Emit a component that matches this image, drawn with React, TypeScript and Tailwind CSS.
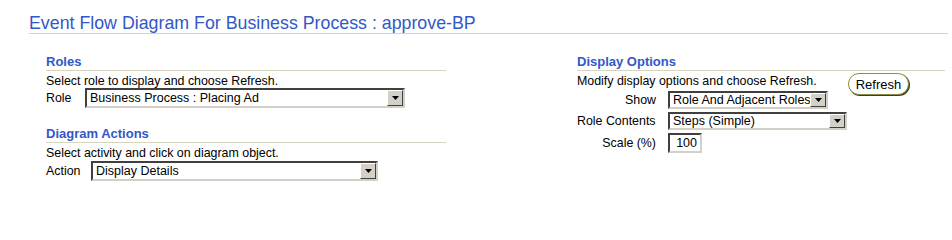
import type { ReactNode } from 'react'

const font = { fontFamily: '"Liberation Sans", Arial, sans-serif' }

function Select({ value, width, height }: { value: string; width: string; height: string }) {
  return (
    <div
      className={`flex ${width} ${height} border-2 border-t-[#404040] border-l-[#404040] border-b-[#d4d0c8] border-r-[#d4d0c8] bg-white`}
    >
      <div className="flex-1 flex items-center pl-[3px] text-[12.5px] leading-none text-black whitespace-nowrap overflow-hidden">
        {value}
      </div>
      <div className="w-[16px] flex items-center justify-center bg-[#d4d0c8] border border-t-white border-l-white border-b-[#404040] border-r-[#404040]">
        <svg width="7" height="4" viewBox="0 0 7 4">
          <path d="M0 0h7L3.5 4z" fill="#000" />
        </svg>
      </div>
    </div>
  )
}

function Heading({ children }: { children: ReactNode }) {
  return (
    <div className="text-[13px] leading-[16px] font-bold text-[#3158c8] border-b border-[#d4d4bf]">
      {children}
    </div>
  )
}

function Hint({ children }: { children: ReactNode }) {
  return <div className="mt-[3px] text-[12.4px] leading-[14px] text-black whitespace-nowrap">{children}</div>
}

export default function App() {
  return (
    <div className="w-[952px] h-[214px] bg-white pl-[29px] pr-[4px] pt-[13px]" style={font}>
      {/* Title */}
      <h1 className="text-[17.8px] leading-[20px] text-[#3158c8] border-b border-[#d4d4bf] whitespace-nowrap">
        Event Flow Diagram For Business Process : approve-BP
      </h1>

      <div className="flex pl-[17px] mt-[20px]">
        {/* Left column */}
        <div className="w-[400px]">
          <Heading>Roles</Heading>
          <Hint>Select role to display and choose Refresh.</Hint>
          <div className="flex items-center">
            <span className="w-[39px] text-[12.4px] text-black">Role</span>
            <Select value="Business Process : Placing Ad" width="w-[320px]" height="h-[20px]" />
          </div>

          <div className="mt-[18px]">
            <Heading>Diagram Actions</Heading>
          </div>
          <Hint>Select activity and click on diagram object.</Hint>
          <div className="flex items-center mt-[1px]">
            <span className="w-[45px] text-[12.4px] text-black">Action</span>
            <Select value="Display Details" width="w-[287px]" height="h-[20px]" />
          </div>
        </div>

        {/* Right column */}
        <div className="ml-[131px] w-[368px]">
          <Heading>Display Options</Heading>
          <div className="flex">
            <div className="w-[271px]">
              <Hint>Modify display options and choose Refresh.</Hint>
              <div className="flex items-center mt-[3px]">
                <span className="w-[91px] pr-[12px] text-right text-[12.4px] text-black">Show</span>
                <Select value="Role And Adjacent Roles" width="w-[160px]" height="h-[18px]" />
              </div>
              <div className="flex items-center mt-[2px]">
                <span className="w-[91px] pr-[12px] text-[12.4px] text-black whitespace-nowrap">Role Contents</span>
                <Select value="Steps (Simple)" width="w-[179px]" height="h-[18px]" />
              </div>
              <div className="flex items-center mt-[3px]">
                <span className="w-[91px] pr-[12px] text-right text-[12.4px] text-black">Scale (%)</span>
                <div className="w-[34px] h-[20px] border-2 border-t-[#404040] border-l-[#404040] border-b-[#d4d0c8] border-r-[#d4d0c8] bg-white text-right pr-[3px] text-[12.5px] leading-[16px] text-black">
                  100
                </div>
              </div>
            </div>
            <button className="mt-[2px] h-[22px] w-[61px] rounded-full border border-[#8a8a4a] bg-white text-[13px] leading-none text-black shadow-[1px_1px_0_#3f3f10]">
              Refresh
            </button>
          </div>
        </div>
      </div>
    </div>
  )
}
